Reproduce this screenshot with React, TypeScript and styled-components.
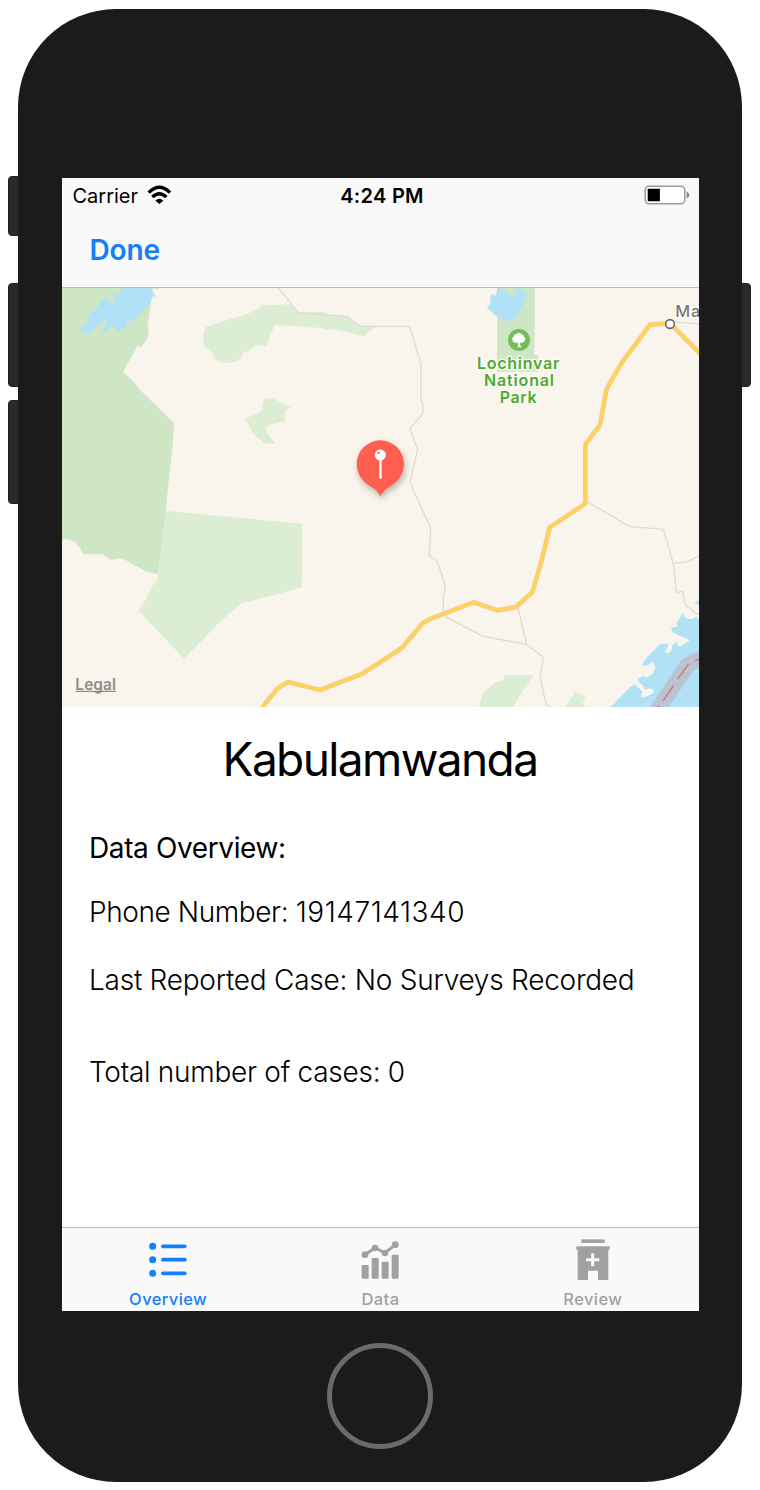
import React from "react";
import styled, { createGlobalStyle } from "styled-components";

const GlobalStyle = createGlobalStyle`
  body { margin: 0; background: #fff; }
  * { box-sizing: border-box; }
`;

const Stage = styled.main`
  width: 760px;
  height: 1490px;
  padding: 8.5px 18px 0;
  background: #fff;
  font-family: Inter, "Liberation Sans", sans-serif;
`;

const Phone = styled.div`
  position: relative;
  display: flex;
  flex-direction: column;
  width: 724px;
  height: 1473px;
  padding: 169.5px 43px 0 44px;
  border-radius: 98px;
  background: #1b1b1b;
`;

const SideButton = styled.i<{ $side: "left" | "right"; $top: number; $height: number }>`
  position: absolute;
  ${(p) => p.$side}: ${(p) => (p.$side === "left" ? -10.5 : -9)}px;
  top: ${(p) => p.$top}px;
  width: ${(p) => (p.$side === "left" ? 11.5 : 10)}px;
  height: ${(p) => p.$height}px;
  border: 1px solid #1f1f1f;
  border-radius: ${(p) => (p.$side === "left" ? "4px 0 0 4px" : "0 4px 4px 0")};
  background: #2b2b2b;
`;

const Screen = styled.section`
  display: flex;
  flex-direction: column;
  height: 1133px;
  background: #fff;
  color: #000;
  white-space: nowrap;
`;

const StatusBar = styled.div`
  display: grid;
  grid-template-columns: 1fr auto 1fr;
  align-items: center;
  height: 34px;
  padding: 1px 9px 0 10.5px;
  background: #f9f9f9;
  font-size: 20px;
`;

const Carrier = styled.div`
  display: flex;
  align-items: center;
  gap: 9px;
  svg { margin-top: -2px; }
`;

const Clock = styled.time`
  margin-left: 1.5px;
  font-weight: 600;
  letter-spacing: 0.3px;
`;

const BatterySlot = styled.div`
  display: flex;
  justify-content: flex-end;
  margin-top: -2px;
`;

const NavBar = styled.header`
  display: flex;
  align-items: center;
  height: 76px;
  padding: 0 27.5px;
  border-bottom: 1px solid #bcbdb9;
  background: #f9f9f9;
`;

const DoneButton = styled.button`
  padding: 0;
  border: 0;
  background: none;
  color: #157efb;
  font: 600 28px/36px Inter, sans-serif;
  letter-spacing: -0.15px;
`;

const MapView = styled.svg`
  display: block;
  flex: none;
  width: 637px;
  height: 419px;
  font-family: Inter, sans-serif;
`;

const Details = styled.div`
  display: flex;
  flex: 1;
  flex-direction: column;
  padding: 24px 27px 0;
`;

const Title = styled.h1`
  margin: 0 0 43px;
  padding-right: 1px;
  text-align: center;
  font-weight: 400;
  font-size: 46px;
  line-height: 56px;
  letter-spacing: -1.6px;
`;

const Line = styled.p<{ $gap?: number; $weight?: number; $spacing?: number }>`
  margin: 0 0 ${(p) => p.$gap ?? 0}px;
  font-size: 28px;
  font-weight: ${(p) => p.$weight ?? 300};
  line-height: 36px;
  letter-spacing: ${(p) => p.$spacing ?? 0}px;
`;

const Digits = styled.span`
  letter-spacing: 0.55px;
`;

const TabBar = styled.nav`
  display: grid;
  grid-template-columns: repeat(3, 1fr);
  height: 84px;
  border-top: 1px solid #c0c0c0;
  background: #f9f9f9;
`;

const Tab = styled.a<{ $active?: boolean }>`
  display: flex;
  flex-direction: column;
  align-items: center;
  padding-top: 10px;
  color: ${(p) => (p.$active ? "#157efb" : "#a1a1a1")};
  font-size: 16.5px;
  font-weight: 500;
  line-height: 20px;
  letter-spacing: 0.4px;
  svg { display: block; margin-bottom: 7px; }
`;

const HomeButton = styled.div`
  align-self: center;
  width: 106px;
  height: 106px;
  margin-top: 31.5px;
  margin-left: -2px;
  border: 5px solid #6b6b6b;
  border-radius: 50%;
`;

const WifiIcon = () => (
  <svg width="25" height="19" viewBox="262 46 75 57" fill="none" stroke="#000" strokeWidth="10">
    <path d="M267 69Q299 37 331 69" />
    <path d="M278 82Q299 62 320 82" />
    <path d="M287 93Q299 81 311 93L299 103Z" fill="#000" stroke="none" />
  </svg>
);

const BatteryIcon = () => (
  <svg width="46" height="20" viewBox="0 0 46 20">
    <rect x="1.2" y="1.2" width="39.6" height="17.6" rx="4" fill="#fff" stroke="#9b9b9b" strokeWidth="1.5" />
    <rect x="3.7" y="3.7" width="12.2" height="12.6" rx=".6" />
    <path d="M42.7 6.5Q45.4 8 45.4 10T42.7 13.5Z" fill="#888" />
  </svg>
);

const ListIcon = () => (
  <svg width="44" height="44" viewBox="0 0 132 132" fill="currentColor">
    {[25, 65, 106].map((y) => (
      <g key={y}>
        <circle cx="20" cy={y} r="10.5" />
        <rect x="45" y={y - 5.5} width="77" height="11" rx="5.5" />
      </g>
    ))}
  </svg>
);

const ChartIcon = () => (
  <svg width="44" height="44" viewBox="0 0 132 132" fill="currentColor">
    <path d="M21 50L51 29L81 45L112 20" fill="none" stroke="currentColor" strokeWidth="9" />
    <circle cx="21" cy="50" r="10" />
    <circle cx="51" cy="30" r="10" />
    <circle cx="81" cy="45" r="10" />
    <circle cx="112" cy="20" r="10" />
    <rect x="11" y="81" width="21" height="41" rx="3" />
    <rect x="41" y="60" width="21" height="62" rx="3" />
    <rect x="71" y="71" width="21" height="51" rx="3" />
    <rect x="101" y="50" width="21" height="72" rx="3" />
  </svg>
);

const ClinicIcon = () => (
  <svg width="44" height="44" viewBox="0 0 132 132" fill="currentColor">
    <rect x="31" y="4" width="70" height="11" />
    <path
      fillRule="evenodd"
      d="M16 25H116V35H112V126H81V98H51V126H20V35H16ZM60.500 46V60.500H45V69.500H60.500V85H69.500V69.500H85V60.500H69.500V46Z"
    />
  </svg>
);

const RegionMap = () => (
  <MapView viewBox="6 9 1911 1257">
    <defs>
      <filter id="pinShadow" x="-40%" y="-30%" width="190%" height="180%">
        <feDropShadow dx="4" dy="10" stdDeviation="9" floodColor="#000" floodOpacity=".27" />
      </filter>
    </defs>
    <rect x="6" y="9" width="1911" height="1257" fill="#f9f4ec" />

    {/* western parks */}
    <path fill="#cfe6c5" d="M6 6H280L276 36L263 120L266 154L245 187L233 181L189 262L212 281L250 325L342 414L340 460L321 640L318 678L294 867L262 860L232 845L202 828Q185 820 170 822L152 825L140 815Q132 808 120 808H70Q58 782 45 771Q30 760 6 764Z" />
    <path fill="#dbedd3" d="M318 678L727 716L725 907L655 927L545 954L475 1015L420 1073L372 1121L236 977L262 935L275 905L294 882V867Z" />
    <path fill="#dbedd3" d="M429 160L436 127L520 99L560 88L588 75L608 61L690 58L716 82L790 80L808 93L860 94L900 122L948 124L911 153L860 141L830 134L800 133L780 128L735 127L715 122L690 124L645 118L618 184L587 179L567 198L549 200L547 213Q540 230 500 235Q460 230 459 205L432 182Z" />
    <path fill="#dbedd3" d="M555 403L605 377L613 338L628 344L638 339L693 368L676 374L673 410L622 421L618 440L648 477L607 474L601 464L578 445L567 420Z" />
    <path fill="#b0e1f6" d="M200 6H275L278 22L287 33L276 36L265 65L243 83L232 98L216 108L202 110L196 127L177 139L163 127L155 122L143 137L124 143L128 133L140 115V106L130 104L121 118L108 122L100 135L88 145L84 151L75 141L57 139L66 124L77 123L85 108L80 98L103 74L113 68L121 46L140 40L150 42L148 53L155 56L165 50L163 40L150 34L172 30L185 15Z" />

    <g transform="translate(960 0)">
      {/* Lochinvar park and lagoon */}
      <path fill="#cfe6c5" d="M351 6H464V150L462 210H474V260H351Z" />
      <path fill="#b0e1f6" d="M352 10L376 13L385 30L398 35L408 26L406 10L424 12L438 26L434 50L413 88L404 102L377 110L345 90L332 78L320 65L331 58V38L336 27L347 33Z" />
      <path fill="#dbedd3" d="M297 1266L308 1227L338 1198L370 1184L374 1170H461L448 1192L434 1207L400 1266ZM557 1266L585 1220L616 1236L608 1256L618 1266Z" />
      {/* Lake Kariba */}
      <path fill="#b0e1f6" d="M688 1266L705 1255L712 1245L750 1207L765 1197L788 1222L782 1235L790 1238L808 1231L822 1222L820 1213L805 1210L793 1215L790 1202L774 1190L775 1180L792 1172L797 1180L817 1168L826 1148L820 1129L803 1141L784 1142L796 1122L842 1076L866 1077L858 1095L853 1103L868 1104L877 1092L876 1084L892 1068L891 1082L905 1083L930 1066L908 1056L880 1043L872 1030L893 1024L890 1015L908 984L916 1000L935 1003L948 995L957 1003V1266ZM943 954L957 946V960Z" />
      <path fill="#b9c3d1" d="M810 1266L907 1122L957 1098V1148L938 1160L866 1266Z" />
      <path fill="none" stroke="#cf8479" strokeWidth="5" d="M834 1267L838 1262M849 1248L881 1201M893 1183L926 1136M945 1127L957 1122" />
      {/* minor roads */}
      <path
        fill="none"
        stroke="#dedbd3"
        strokeWidth="4"
        strokeLinejoin="round"
        d="M-307 6L-244 84L-100 94L-60 123L0 124H89L123 238V352H128V387L89 430L113 494L90 592L107 630L152 730L148 811L172 830L196 903L190 935V992L310 1054L440 1078L490 1117L480 1175L498 1258L510 1266M414 968L440 1078M621 650L748 724L850 733L880 835L889 922L909 919L914 957L950 987L957 985M880 835L920 831L960 811M870 110L960 117M-678 9L-670 12L-662 8"
      />
      {/* highway */}
      {[
        { color: "#f3c6a0", width: 14 },
        { color: "#ffd54f", width: 9 },
      ].map(({ color, width }) => (
        <path
          key={color}
          fill="none"
          stroke={color}
          strokeWidth={width}
          strokeLinejoin="round"
          d="M965 210L870 115L810 119L726 232L680 311L660 420L616 478V656L509 727L486 823L457 922L408 966L352 976L280 952L155 1000L128 1015L65 1089L0 1132L-55 1167L-180 1215L-276 1191L-306 1209L-360 1275"
        />
      ))}
      <circle cx="870" cy="117" r="13" fill="#fff" stroke="#6c6c6c" strokeWidth="5" />
      <text x="886" y="95" fontSize="49" fontWeight="500" letterSpacing="2" fill="#77756f" stroke="#fff" strokeWidth="7" paintOrder="stroke">
        Ma
      </text>

      <circle cx="417" cy="165" r="33" fill="#73bd58" />
      <path fill="#fff" d="M413 187L415 172Q408 177 404 172Q397 172 398 165Q394 158 401 155Q402 147 410 147Q417 140 424 147Q431 147 432 155Q439 159 434 166Q434 173 427 172Q423 177 419 172L421 182L426 187Z" />
      <g fill="#4caa32" fontSize="48" fontWeight="600" stroke="#fdfbf6" strokeWidth="8" strokeLinejoin="round" paintOrder="stroke">
        <text x="291" y="252" textLength="247">Lochinvar</text>
        <text x="312" y="303" textLength="210">National</text>
        <text x="359" y="354" textLength="111">Park</text>
      </g>
    </g>

    <path filter="url(#pinShadow)" fill="#ff5f4f" d="M961 466A71 71 0 0 1 1032 537C1032 570 1010 594 988 606C974 614 968 622 961 634C954 622 948 614 934 606C912 594 890 570 890 537A71 71 0 0 1 961 466Z" />
    <rect x="958" y="520" width="7" height="61" rx="2" fill="#fff" />
    <circle cx="961" cy="510" r="16.500" fill="#fff" />
    <circle cx="956" cy="504" r="3.500" fill="#ff5f4f" />

    <text x="46" y="1216" fontSize="46" fontWeight="600" textLength="122" fill="#8e8c87">
      Legal
    </text>
    <path d="M47 1219H168" stroke="#8e8c87" strokeWidth="4" />
  </MapView>
);

export default function App() {
  return (
    <Stage>
      <GlobalStyle />
      <Phone>
        <SideButton $side="left" $top={167.5} $height={60} />
        <SideButton $side="left" $top={274.5} $height={104} />
        <SideButton $side="left" $top={391.5} $height={104} />
        <SideButton $side="right" $top={274.5} $height={104} />
        <Screen>
          <StatusBar>
            <Carrier>
              Carrier <WifiIcon />
            </Carrier>
            <Clock>4:24 PM</Clock>
            <BatterySlot>
              <BatteryIcon />
            </BatterySlot>
          </StatusBar>
          <NavBar>
            <DoneButton>Done</DoneButton>
          </NavBar>
          <RegionMap />
          <Details>
            <Title>Kabulamwanda</Title>
            <Line $gap={28} $weight={400} $spacing={-0.38}>Data Overview:</Line>
            <Line $gap={32} $spacing={-0.4}>
              Phone Number: <Digits>19147141340</Digits>
            </Line>
            <Line $gap={56} $spacing={-0.25}>Last Reported Case: No Surveys Recorded</Line>
            <Line $spacing={-0.28}>Total number of cases: 0</Line>
          </Details>
          <TabBar>
            <Tab $active>
              <ListIcon />
              Overview
            </Tab>
            <Tab>
              <ChartIcon />
              Data
            </Tab>
            <Tab>
              <ClinicIcon />
              Review
            </Tab>
          </TabBar>
        </Screen>
        <HomeButton />
      </Phone>
    </Stage>
  );
}
